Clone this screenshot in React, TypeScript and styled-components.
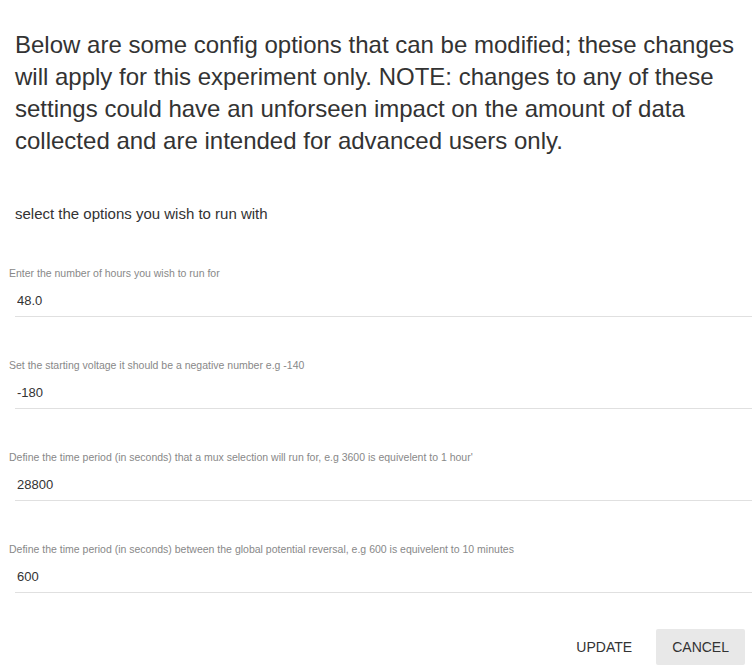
import React from "react"
import styled, { createGlobalStyle } from "styled-components"

const GlobalStyle = createGlobalStyle`
  html, body {
    margin: 0;
    padding: 0;
    background: #fff;
  }
  body {
    font-family: "Liberation Sans", Arial, sans-serif;
    color: #333;
  }
`

const Dialog = styled.div`
  width: 753px;
  height: 672px;
  background: #fff;
  overflow: hidden;
  display: flex;
  flex-direction: column;
`

const Title = styled.h3`
  margin: 0;
  padding: 29px 12px 0 15px;
  font-size: 24px;
  line-height: 32px;
  font-weight: 400;
  color: #333;
`

const Body = styled.div`
  padding: 49px 0 0 0;
`

const Intro = styled.p`
  margin: 0 0 0 15px;
  font-size: 15px;
  line-height: 16px;
  color: #333;
`

const Field = styled.div<{ $first?: boolean }>`
  margin-top: ${p => (p.$first ? "45px" : "42px")};
`

const Label = styled.label`
  display: block;
  padding-left: 9px;
  font-size: 10.5px;
  line-height: 12px;
  color: #888;
`

const Input = styled.input`
  display: block;
  box-sizing: border-box;
  margin: 6px 0 0 15px;
  width: calc(100% - 16px);
  height: 32px;
  padding: 0 0 0 2px;
  border: none;
  border-bottom: 1px solid #e0e0e0;
  outline: none;
  background: transparent;
  font-family: "Liberation Sans", Arial, sans-serif;
  font-size: 13px;
  color: #333;
`

const Actions = styled.div`
  display: flex;
  justify-content: flex-end;
  gap: 8px;
  padding: 36px 8px 0 0;
`

const Button = styled.button<{ $filled?: boolean }>`
  height: 36px;
  min-width: 88px;
  padding: 0 16px;
  border: none;
  border-radius: 2px;
  background: ${p => (p.$filled ? "#e8e8e8" : "transparent")};
  font-family: "Liberation Sans", Arial, sans-serif;
  font-size: 14px;
  color: #333;
  text-transform: uppercase;
  cursor: pointer;
`

const fields = [
  { label: "Enter the number of hours you wish to run for", value: "48.0" },
  { label: "Set the starting voltage it should be a negative number e.g -140", value: "-180" },
  {
    label:
      "Define the time period (in seconds) that a mux selection will run for, e.g 3600 is equivelent to 1 hour'",
    value: "28800",
  },
  {
    label:
      "Define the time period (in seconds) between the global potential reversal, e.g 600 is equivelent to 10 minutes",
    value: "600",
  },
]

export default function App() {
  return (
    <>
      <GlobalStyle />
      <Dialog>
        <Title>
          Below are some config options that can be modified; these changes will apply for this
          experiment only. NOTE: changes to any of these settings could have an unforseen impact on
          the amount of data collected and are intended for advanced users only.
        </Title>
        <Body>
          <Intro>select the options you wish to run with</Intro>
          {fields.map((f, i) => (
            <Field key={i} $first={i === 0}>
              <Label>{f.label}</Label>
              <Input defaultValue={f.value} />
            </Field>
          ))}
        </Body>
        <Actions>
          <Button>Update</Button>
          <Button $filled>Cancel</Button>
        </Actions>
      </Dialog>
    </>
  )
}
